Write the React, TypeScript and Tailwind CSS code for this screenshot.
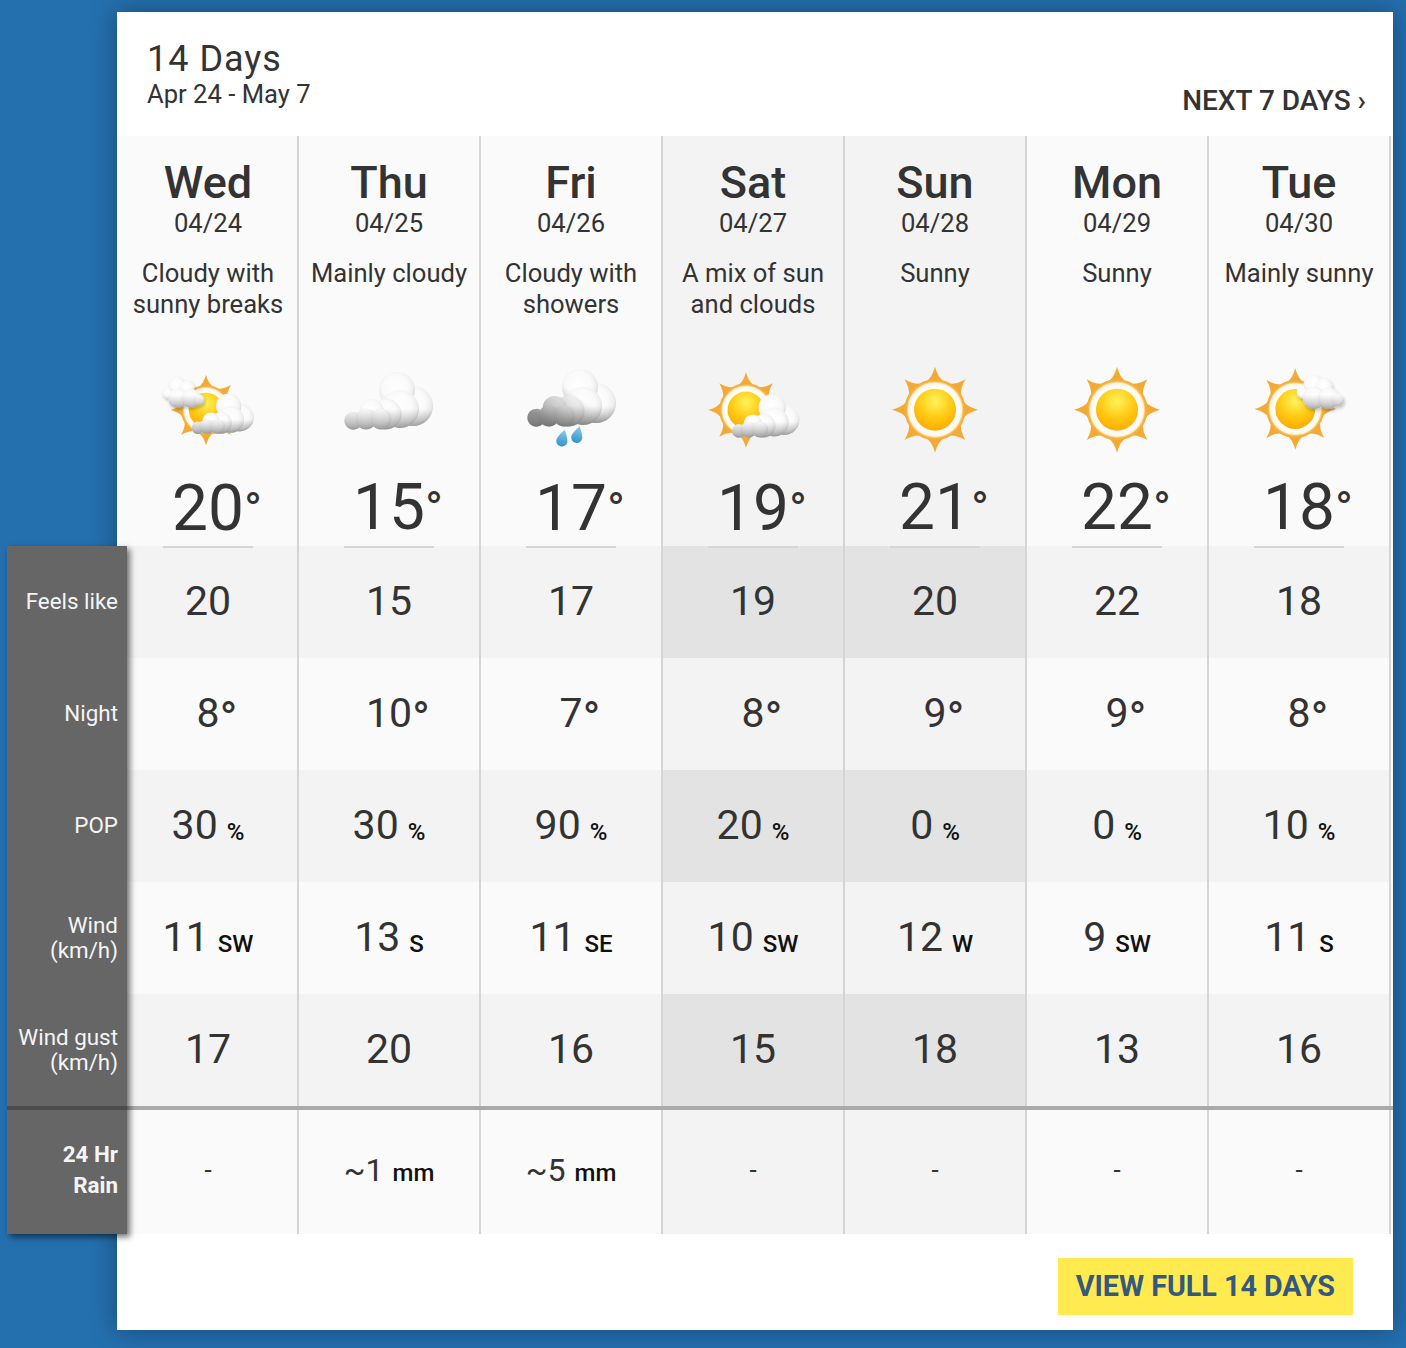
import React from "react";

type Day = {
  d: string; date: string; desc: string; icon: string; t: number; feels: number; night: number;
  pop: number; wind: number; dir: string; gust: number; rain: string; alt?: boolean; first?: boolean;
};

const days: Day[] = [
  { d: "Wed", date: "04/24", desc: "Cloudy with sunny breaks", icon: "wed", t: 20, feels: 20, night: 8, pop: 30, wind: 11, dir: "SW", gust: 17, rain: "-", first: true },
  { d: "Thu", date: "04/25", desc: "Mainly cloudy", icon: "thu", t: 15, feels: 15, night: 10, pop: 30, wind: 13, dir: "S", gust: 20, rain: "1" },
  { d: "Fri", date: "04/26", desc: "Cloudy with showers", icon: "fri", t: 17, feels: 17, night: 7, pop: 90, wind: 11, dir: "SE", gust: 16, rain: "5" },
  { d: "Sat", date: "04/27", desc: "A mix of sun and clouds", icon: "sat", t: 19, feels: 19, night: 8, pop: 20, wind: 10, dir: "SW", gust: 15, rain: "-", alt: true },
  { d: "Sun", date: "04/28", desc: "Sunny", icon: "sun", t: 21, feels: 20, night: 9, pop: 0, wind: 12, dir: "W", gust: 18, rain: "-", alt: true },
  { d: "Mon", date: "04/29", desc: "Sunny", icon: "sun", t: 22, feels: 22, night: 9, pop: 0, wind: 9, dir: "SW", gust: 13, rain: "-" },
  { d: "Tue", date: "04/30", desc: "Mainly sunny", icon: "tue", t: 18, feels: 18, night: 8, pop: 10, wind: 11, dir: "S", gust: 16, rain: "-" },
];

type Puff = [number, number, number];

const bigPuffs: Puff[] = [
  [74, 47, 20], [58, 31, 18], [61, 50, 19], [47, 55, 15.5], [32.7, 52, 12], [14.3, 61.7, 9], [27, 60, 10.5], [42, 60, 10.5],
];
const smallPuffs: Puff[] = [
  [11.5, 36, 6], [20, 28.5, 8.5], [30, 31, 7.5], [21, 41, 10], [34, 41.5, 9.5], [42, 43, 5.5],
];

const Puffs = ({ items, fill }: { items: Puff[]; fill: string }) => (
  <>
    {items.map(([cx, cy, r], i) => (
      <circle key={i} cx={cx} cy={cy} r={r} fill={fill} />
    ))}
  </>
);

const Defs = () => (
  <defs>
    <radialGradient id="puff" cx="46%" cy="42%" r="58%">
      <stop offset="0%" stopColor="#ffffff" />
      <stop offset="60%" stopColor="#fafafa" />
      <stop offset="85%" stopColor="#ededed" />
      <stop offset="100%" stopColor="#d2d2d2" />
    </radialGradient>
    <radialGradient id="core" cx="50%" cy="30%" r="72%">
      <stop offset="0%" stopColor="#fff45c" />
      <stop offset="55%" stopColor="#ffca14" />
      <stop offset="100%" stopColor="#ffa900" />
    </radialGradient>
    <radialGradient id="halo" cx="50%" cy="50%" r="50%">
      <stop offset="74%" stopColor="#ffffff" />
      <stop offset="87%" stopColor="#fff6de" />
      <stop offset="93%" stopColor="#f6b443" />
      <stop offset="100%" stopColor="#f3aa35" />
    </radialGradient>
    <linearGradient id="shade" gradientUnits="userSpaceOnUse" x1="0" y1="50" x2="0" y2="71">
      <stop offset="0%" stopColor="#808080" stopOpacity="0" />
      <stop offset="100%" stopColor="#707070" stopOpacity="0.65" />
    </linearGradient>
    <linearGradient id="shadeSmall" gradientUnits="userSpaceOnUse" x1="0" y1="38" x2="0" y2="51">
      <stop offset="0%" stopColor="#808080" stopOpacity="0" />
      <stop offset="100%" stopColor="#707070" stopOpacity="0.5" />
    </linearGradient>
    <linearGradient id="rainShade" gradientUnits="userSpaceOnUse" x1="66" y1="26" x2="34" y2="72">
      <stop offset="30%" stopColor="#666666" stopOpacity="0" />
      <stop offset="100%" stopColor="#5c5c5c" stopOpacity="0.6" />
    </linearGradient>
    <linearGradient id="drop" x1="0" y1="0" x2="0" y2="1">
      <stop offset="0%" stopColor="#8ccbe8" />
      <stop offset="100%" stopColor="#2f94cb" />
    </linearGradient>
    <clipPath id="bigClip">
      {bigPuffs.map(([cx, cy, r], i) => <circle key={i} cx={cx} cy={cy} r={r} />)}
    </clipPath>
    <clipPath id="smallClip">
      {smallPuffs.map(([cx, cy, r], i) => <circle key={i} cx={cx} cy={cy} r={r} />)}
    </clipPath>
    <filter id="blur" x="-10%" y="-10%" width="120%" height="120%">
      <feGaussianBlur stdDeviation="0.6" />
    </filter>
    <filter id="soft" x="-20%" y="-20%" width="140%" height="150%">
      <feGaussianBlur in="SourceGraphic" stdDeviation="0.35" result="b" />
      <feDropShadow in="b" dx="1" dy="2" stdDeviation="1.5" floodColor="#000000" floodOpacity="0.22" />
    </filter>
  </defs>
);

const BigCloud = ({ transform, dark }: { transform?: string; dark?: boolean }) => (
  <g transform={transform} filter="url(#blur)">
    <Puffs items={bigPuffs} fill="url(#puff)" />
    <rect x="0" y="0" width="100" height="80" fill="url(#shade)" clipPath="url(#bigClip)" />
    {dark && <rect x="0" y="0" width="100" height="80" fill="url(#rainShade)" clipPath="url(#bigClip)" />}
  </g>
);

const SmallCloud = ({ transform }: { transform?: string }) => (
  <g transform={transform} filter="url(#soft)">
    <Puffs items={smallPuffs} fill="url(#puff)" />
    <rect x="0" y="0" width="60" height="60" fill="url(#shadeSmall)" clipPath="url(#smallClip)" />
  </g>
);

const Sun = ({ cx, cy, s }: { cx: number; cy: number; s: number }) => (
  <g transform={`translate(${cx} ${cy}) scale(${s})`}>
    {[0, 45, 90, 135, 180, 225, 270, 315].map((a) => (
      <path key={a} transform={`rotate(${a})`} d="M-9 -28 Q-3 -32 0 -43 Q3 -32 9 -28 Z" fill="#f3aa35" />
    ))}
    <circle r="30.5" fill="url(#halo)" />
    <circle r="21" fill="url(#core)" />
  </g>
);

const Icon = ({ kind }: { kind: string }) => (
  <svg width="100" height="100" viewBox="0 0 100 100" className="block">
    <Defs />
    {kind === "sun" && <Sun cx={50} cy={50.7} s={1} />}
    {kind === "wed" && (
      <>
        <Sun cx={48} cy={50} s={0.82} />
        <BigCloud transform="translate(30 24.5) scale(0.7)" />
        <SmallCloud transform="translate(-1 -3)" />
      </>
    )}
    {kind === "thu" && <BigCloud />}
    {kind === "fri" && (
      <>
        <BigCloud transform="translate(1 -4)" dark />
        <path transform="rotate(14 41.7 78)" d="M41.7 69.5 Q36 78 36 81 a5.6 5.6 0 0 0 11.2 0 Q47.2 78 41.7 69.5 Z" fill="url(#drop)" />
        <path transform="rotate(14 56.7 74)" d="M56.7 66 Q51 74.5 51 77.5 a5.6 5.6 0 0 0 11.2 0 Q62.2 74.5 56.7 66 Z" fill="url(#drop)" />
      </>
    )}
    {kind === "sat" && (
      <>
        <Sun cx={43} cy={50} s={0.88} />
        <BigCloud transform="translate(25 24) scale(0.76)" />
      </>
    )}
    {kind === "tue" && (
      <>
        <Sun cx={46.3} cy={50} s={0.95} />
        <SmallCloud transform="translate(41.5 -7) scale(1.12)" />
      </>
    )}
  </svg>
);

const cellClass = "flex items-center justify-center h-[112px] pb-px text-[41px] leading-none text-[#333333]";

const Deg = ({ n, big }: { n: number; big?: boolean }) => (
  <span className="relative inline-block">
    {n}
    <span className={big ? "absolute left-full top-[10px] text-[48px] leading-[48px]" : "absolute left-full top-[3px] text-[48px] leading-[48px]"}>°</span>
  </span>
);

function Column({ day }: { day: Day }) {
  const strong = day.alt ? "bg-[#e3e3e3]" : "bg-[#f3f3f3]";
  const weak = day.alt ? "bg-[#f3f3f3]" : "bg-[#fafafa]";
  const shift = day.first ? "pl-[2px]" : "";
  return (
    <div className="w-[182px] border-r-2 border-[#d3d6d6] flex flex-col text-[#333333]">
      <div className={`h-[410px] flex flex-col items-center ${weak} ${shift}`}>
        <div className="mt-[25px] h-[44px] text-[45px] leading-[44px] font-medium">{day.d}</div>
        <div className="mt-[3px] h-[30px] text-[25.6px] leading-[30px]">{day.date}</div>
        <div className="mt-[20px] h-[62px] px-2 text-[25.6px] leading-[31px] text-center">{day.desc}</div>
        <div className="mt-[40px]"><Icon kind={day.icon} /></div>
        <div className="relative z-10 mt-[15px] pt-[2px] w-[90px] h-[71px] border-b-2 border-[#d3d6d6] text-center text-[64px] leading-[64px] box-content -mb-[2px]">
          <Deg n={day.t} big />
        </div>
      </div>
      <div className={`${cellClass} ${strong} ${shift}`}>{day.feels}</div>
      <div className={`${cellClass} ${weak} ${shift}`}><Deg n={day.night} /></div>
      <div className={`${cellClass} ${strong} ${shift}`}>
        {day.pop}
        <span className="ml-[9px] mt-[13px] text-[24px] font-medium text-[#111111]">%</span>
      </div>
      <div className={`${cellClass} ${weak} ${shift}`}>
        {day.wind}
        <span className="ml-[9px] mt-[12px] text-[24px] font-medium text-[#111111]">{day.dir}</span>
      </div>
      <div className={`${cellClass} ${strong} ${shift}`}>{day.gust}</div>
      <div className="h-[4px] bg-[#aaaaaa] -mr-[4px] relative z-10" />
      <div className={`flex items-center justify-center h-[124px] pb-[4px] text-[#333333] ${weak} ${shift}`}>
        {day.rain === "-" ? (
          <span className="text-[26px] leading-none">-</span>
        ) : (
          <>
            <span className="text-[32px] leading-none">~{day.rain}</span>
            <span className="ml-[9px] mt-[6px] text-[24px] leading-none font-medium text-[#111111]">mm</span>
          </>
        )}
      </div>
    </div>
  );
}

function SideRow({ children, two }: { children: React.ReactNode; two?: boolean }) {
  return (
    <div className={`h-[112px] flex items-center justify-end pr-[9px] text-right text-[22.4px] leading-[25px] text-[#f5f5f5] ${two ? "pb-0" : "pb-[2px]"}`}>
      <div>{children}</div>
    </div>
  );
}

export default function App() {
  return (
    <div className="h-[1348px] bg-[#246fae] pl-[117px] pr-[13px] pt-[12px] overflow-hidden" style={{ fontFamily: "Roboto, sans-serif" }}>
      <div className="relative h-[1318px] bg-white shadow-[0_0_24px_rgba(0,0,0,0.35)]">
        <div className="h-[124px] flex justify-between pl-[30px] pr-[27px] text-[#333333]">
          <div className="pt-[27px]">
            <div className="h-[40px] text-[36px] leading-[40px] tracking-[1px]">14 Days</div>
            <div className="text-[25.6px] leading-[30px]">Apr 24 - May 7</div>
          </div>
          <div className="pt-[74px] text-[28px] leading-[30px] font-medium">NEXT 7 DAYS ›</div>
        </div>
        <div className="flex bg-[#fafafa]">
          {days.map((day) => (
            <Column key={day.d} day={day} />
          ))}
        </div>
        <div className="h-[96px] flex justify-end items-start pt-[24px] pr-[40px]">
          <div className="h-[57px] flex items-center px-[18px] bg-[#ffeb4f] text-[#34587f] text-[28.7px] font-bold">VIEW FULL 14 DAYS</div>
        </div>
        <div className="absolute left-[-110px] top-[534px] w-[120px] h-[688px] z-20 bg-[#666666] shadow-[3px_3px_6px_rgba(0,0,0,0.55)]">
          <SideRow>Feels like</SideRow>
          <SideRow>Night</SideRow>
          <SideRow>POP</SideRow>
          <SideRow two>Wind<br />(km/h)</SideRow>
          <SideRow two>Wind gust<br />(km/h)</SideRow>
          <div className="h-[4px] bg-[#4a4a4a]" />
          <div className="h-[124px] flex items-center justify-end pr-[9px] pb-[4px] text-right text-[22.4px] leading-[31px] font-bold text-[#f5f5f5]">
            <div>24 Hr<br />Rain</div>
          </div>
        </div>
      </div>
    </div>
  );
}
